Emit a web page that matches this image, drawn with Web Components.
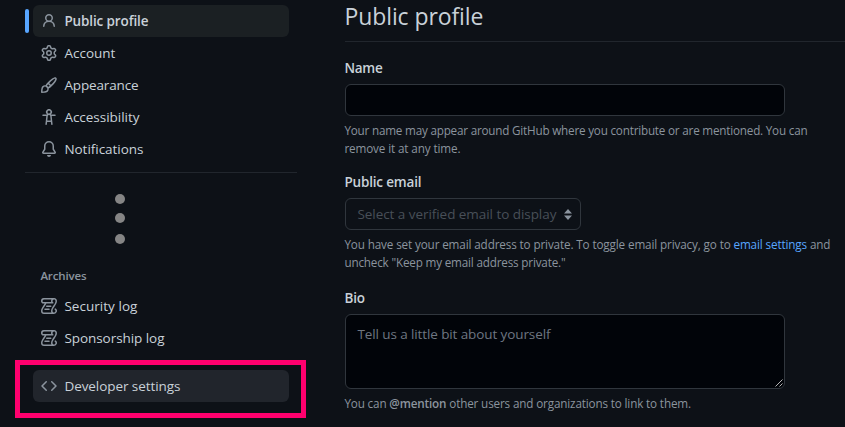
<!DOCTYPE html>
<html lang="en">
<head>
<meta charset="utf-8">
<title>Public profile</title>
<style>
html,body{margin:0;height:100%;overflow:hidden;background:#0d1117}
body{font-family:"Open Sans","Noto Sans",sans-serif;font-size:13.5px;color:#c9d1d9}
a{color:#58a6ff;text-decoration:none}
b{font-weight:600}
</style>
</head>
<body>
<settings-page>
  <nav-list slot="nav">
    <nav-item icon="person" selected><fit-text width="84">Public profile</fit-text></nav-item>
    <nav-item icon="gear"><fit-text width="51">Account</fit-text></nav-item>
    <nav-item icon="brush"><fit-text width="74">Appearance</fit-text></nav-item>
    <nav-item icon="access"><fit-text width="75">Accessibility</fit-text></nav-item>
    <nav-item icon="bell"><fit-text width="79">Notifications</fit-text></nav-item>
    <more-dots></more-dots>
    <nav-heading><fit-text width="46">Archives</fit-text></nav-heading>
    <nav-item icon="log"><fit-text width="73">Security log</fit-text></nav-item>
    <nav-item icon="log"><fit-text width="100">Sponsorship log</fit-text></nav-item>
    <highlight-box><nav-item icon="code" hovered><fit-text width="116">Developer settings</fit-text></nav-item></highlight-box>
  </nav-list>
  <page-title><fit-text width="139">Public profile</fit-text></page-title>
  <form-field>
    <fit-text slot="label" width="38">Name</fit-text>
    <text-box></text-box>
    <fit-text slot="help" width="463">Your name may appear around GitHub where you contribute or are mentioned. You can</fit-text>
    <fit-text slot="help" width="116">remove it at any time.</fit-text>
  </form-field>
  <form-field>
    <fit-text slot="label" width="77">Public email</fit-text>
    <select-box><fit-text width="199">Select a verified email to display</fit-text></select-box>
    <fit-text slot="help" width="486">You have set your email address to private. To toggle email privacy, go to <a href="#">email settings</a> and</fit-text>
    <fit-text slot="help" width="221">uncheck "Keep my email address private."</fit-text>
  </form-field>
  <form-field roomy>
    <fit-text slot="label" width="20.5">Bio</fit-text>
    <text-box multiline><fit-text width="193">Tell us a little bit about yourself</fit-text></text-box>
    <fit-text slot="help" width="346.5">You can <b>@mention</b> other users and organizations to link to them.</fit-text>
  </form-field>
</settings-page>
<script>
const ICONS = {
  person: 'M10.561 8.073a6.005 6.005 0 0 1 3.432 5.142.75.75 0 1 1-1.498.07 4.5 4.5 0 0 0-8.99 0 .75.75 0 0 1-1.498-.07 6.004 6.004 0 0 1 3.431-5.142 3.999 3.999 0 1 1 5.123 0ZM10.5 5a2.5 2.5 0 1 0-5 0 2.5 2.5 0 0 0 5 0Z',
  gear: 'M8 0a8.2 8.2 0 0 1 .701.031C9.444.095 9.99.645 10.16 1.29l.288 1.107c.018.066.079.158.212.224.231.114.454.243.668.386.123.082.233.09.299.071l1.103-.303c.644-.176 1.392.021 1.82.63.27.385.506.792.704 1.218.315.675.111 1.422-.364 1.891l-.814.806c-.049.048-.098.147-.088.294.016.257.016.515 0 .772-.01.147.038.246.088.294l.814.806c.475.469.679 1.216.364 1.891a7.977 7.977 0 0 1-.704 1.217c-.428.61-1.176.807-1.82.63l-1.102-.302c-.067-.019-.177-.011-.3.071a5.909 5.909 0 0 1-.668.386c-.133.066-.194.158-.211.224l-.29 1.106c-.168.646-.715 1.196-1.458 1.26a8.006 8.006 0 0 1-1.402 0c-.743-.064-1.289-.614-1.458-1.26l-.289-1.106c-.018-.066-.079-.158-.212-.224a5.738 5.738 0 0 1-.668-.386c-.123-.082-.233-.09-.299-.071l-1.103.303c-.644.176-1.392-.021-1.82-.63a8.12 8.12 0 0 1-.704-1.218c-.315-.675-.111-1.422.363-1.891l.815-.806c.05-.048.098-.147.088-.294a6.214 6.214 0 0 1 0-.772c.01-.147-.038-.246-.088-.294l-.815-.806C.635 6.045.431 5.298.746 4.623a7.92 7.92 0 0 1 .704-1.217c.428-.61 1.176-.807 1.82-.63l1.102.302c.067.019.177.011.3-.071.214-.143.437-.272.668-.386.133-.066.194-.158.211-.224l.29-1.106C6.009.645 6.556.095 7.299.03 7.53.01 7.764 0 8 0Zm-.571 1.525c-.036.003-.108.036-.137.146l-.289 1.105c-.147.561-.549.967-.998 1.189-.173.086-.34.183-.5.29-.417.278-.97.423-1.529.27l-1.103-.303c-.109-.03-.175.016-.195.045-.22.312-.412.644-.573.99-.014.031-.021.11.059.19l.815.806c.411.406.562.957.53 1.456a4.709 4.709 0 0 0 0 .582c.032.499-.119 1.05-.53 1.456l-.815.806c-.081.08-.073.159-.059.19.162.346.353.677.573.989.02.03.085.076.195.046l1.102-.303c.56-.153 1.113-.008 1.53.27.161.107.328.204.501.29.447.222.85.629.997 1.189l.289 1.105c.029.109.101.143.137.146a6.6 6.6 0 0 0 1.142 0c.036-.003.108-.036.137-.146l.289-1.105c.147-.561.549-.967.998-1.189.173-.086.34-.183.5-.29.417-.278.97-.423 1.529-.27l1.103.303c.109.029.175-.016.195-.045.22-.313.411-.644.573-.99.014-.031.021-.11-.059-.19l-.815-.806c-.411-.406-.562-.957-.53-1.456a4.709 4.709 0 0 0 0-.582c-.032-.499.119-1.05.53-1.456l.815-.806c.081-.08.073-.159.059-.19a6.464 6.464 0 0 0-.573-.989c-.02-.03-.085-.076-.195-.046l-1.102.303c-.56.153-1.113.008-1.53-.27a4.44 4.44 0 0 0-.501-.29c-.447-.222-.85-.629-.997-1.189l-.289-1.105c-.029-.11-.101-.143-.137-.146a6.6 6.6 0 0 0-1.142 0ZM11 8a3 3 0 1 1-6 0 3 3 0 0 1 6 0ZM9.5 8a1.5 1.5 0 1 0-3.001.001A1.5 1.5 0 0 0 9.5 8Z',
  brush: 'M11.134 1.535c.7-.509 1.416-.942 2.076-1.155.649-.21 1.463-.267 2.069.34.603.601.568 1.411.368 2.07-.202.668-.624 1.39-1.125 2.096-1.011 1.424-2.496 2.987-3.775 4.249-1.098 1.084-2.132 1.839-3.04 2.3a3.744 3.744 0 0 1-1.055 3.217c-.431.431-1.065.691-1.657.861-.614.177-1.294.287-1.914.357A21.151 21.151 0 0 1 .797 16H.743l.007-.75H.749L.742 16a.75.75 0 0 1-.743-.742l.743-.008-.742.007v-.054a21.25 21.25 0 0 1 .13-2.284c.067-.647.187-1.287.358-1.914.17-.591.43-1.226.86-1.657a3.746 3.746 0 0 1 3.227-1.054c.466-.893 1.225-1.907 2.314-2.982 1.271-1.255 2.833-2.75 4.246-3.777ZM1.62 13.089c-.051.464-.086.929-.104 1.395.466-.018.932-.053 1.396-.104a10.511 10.511 0 0 0 1.668-.309c.526-.151.856-.325 1.011-.48a2.25 2.25 0 1 0-3.182-3.182c-.155.155-.329.485-.48 1.01a10.515 10.515 0 0 0-.309 1.67Zm10.396-10.34c-1.224.89-2.605 2.189-3.822 3.384l1.718 1.718c1.21-1.205 2.51-2.597 3.387-3.833.47-.662.78-1.227.912-1.662.134-.444.032-.551.009-.575h-.001V1.78c-.014-.014-.113-.113-.548.027-.432.14-.995.462-1.655.942Zm-4.832 7.266-.001.001a9.859 9.859 0 0 0 1.63-1.142L7.155 7.216a9.7 9.7 0 0 0-1.161 1.607c.482.302.889.71 1.19 1.192Z',
  access: 'M9.923 5.302c.063.063.122.129.178.198H14A.75.75 0 0 1 14 7h-3.3l.578 5.163.362 2.997a.75.75 0 0 1-1.49.18L9.868 13H6.132l-.282 2.34a.75.75 0 0 1-1.49-.18l.362-2.997L5.3 7H2a.75.75 0 0 1 0-1.5h3.9a2.54 2.54 0 0 1 .176-.198 3 3 0 1 1 3.847 0ZM9.2 7.073h-.001a1.206 1.206 0 0 0-2.398 0L6.305 11.5h3.39ZM9.5 3a1.5 1.5 0 1 0-3.001.001A1.5 1.5 0 0 0 9.5 3Z',
  bell: 'M8 16a2 2 0 0 0 1.985-1.75c.017-.137-.097-.25-.235-.25h-3.5c-.138 0-.252.113-.235.25A2 2 0 0 0 8 16ZM3 5a5 5 0 0 1 10 0v2.947c0 .05.015.098.042.139l1.703 2.555A1.519 1.519 0 0 1 13.482 13H2.518a1.516 1.516 0 0 1-1.263-2.36l1.703-2.554A.255.255 0 0 0 3 7.947Zm5-3.5A3.5 3.5 0 0 0 4.5 5v2.947c0 .346-.102.683-.294.97l-1.703 2.556a.017.017 0 0 0-.003.01l.001.006c0 .002.002.004.004.006l.006.004.007.001h10.964l.007-.001.006-.004.004-.006.001-.007a.017.017 0 0 0-.003-.01l-1.703-2.554a1.745 1.745 0 0 1-.294-.97V5A3.5 3.5 0 0 0 8 1.5Z',
  log: 'M5 8.25a.75.75 0 0 1 .75-.75h4a.75.75 0 0 1 0 1.5h-4A.75.75 0 0 1 5 8.25ZM4 10.5A.75.75 0 0 0 4 12h4a.75.75 0 0 0 0-1.5H4Z M13-.005c1.654 0 3 1.328 3 3 0 .982-.338 1.933-.783 2.818-.443.879-1.028 1.758-1.582 2.588l-.011.017c-.568.853-1.104 1.659-1.501 2.446-.398.789-.623 1.494-.623 2.136a1.5 1.5 0 1 0 2.333-1.248.75.75 0 0 1 .834-1.246A3 3 0 0 1 13 16H3a3 3 0 0 1-3-3c0-1.582.891-3.135 1.777-4.506.209-.322.418-.637.623-.946.473-.709.923-1.386 1.287-2.048H2.51c-.576 0-1.381-.133-1.907-.783A2.68 2.68 0 0 1 0 2.995a3 3 0 0 1 3-3Zm0 1.5a1.5 1.5 0 0 0-1.5 1.5c0 .476.223.834.667 1.132A.75.75 0 0 1 11.75 5.5H5.368c-.467 1.003-1.141 2.015-1.773 2.963-.192.289-.381.571-.558.845C2.13 10.711 1.5 11.916 1.5 13A1.5 1.5 0 0 0 3 14.5h7.401A2.989 2.989 0 0 1 10 13c0-.979.338-1.928.784-2.812.441-.874 1.023-1.748 1.575-2.576l.017-.026c.568-.853 1.103-1.658 1.501-2.448.398-.79.623-1.497.623-2.143 0-.838-.669-1.5-1.5-1.5Zm-10 0a1.5 1.5 0 0 0-1.5 1.5c0 .321.1.569.27.778.097.12.325.227.74.227h7.674A2.737 2.737 0 0 1 10 2.995c0-.546.146-1.059.401-1.5Z',
  code: 'm11.28 3.22 4.25 4.25a.75.75 0 0 1 0 1.06l-4.25 4.25a.749.749 0 0 1-1.275-.326.749.749 0 0 1 .215-.734L13.94 8l-3.72-3.72a.749.749 0 0 1 .326-1.275.749.749 0 0 1 .734.215Zm-6.56 0a.751.751 0 0 1 1.042.018.751.751 0 0 1 .018 1.042L2.06 8l3.72 3.72a.749.749 0 0 1-.326 1.275.749.749 0 0 1-.734-.215L.47 8.53a.75.75 0 0 1 0-1.06Z'
};

// Registers an element whose shadow root is filled from a string or a function of the element.
function define(name, content) {
  customElements.define(name, class extends HTMLElement {
    constructor() {
      super();
      this.attachShadow({ mode: 'open' });
    }
    connectedCallback() {
      this.shadowRoot.innerHTML = typeof content === 'function' ? content(this) : content;
    }
  });
}

define('settings-page', `<style>
  :host{display:grid;grid-template-columns:272px 1fr;column-gap:48px;padding-left:25px;height:427px;box-sizing:border-box;overflow:hidden}
  main{display:flex;flex-direction:column;min-width:0}
</style><slot name="nav"></slot><main><slot></slot></main>`);

define('nav-list', `<style>:host{display:flex;flex-direction:column;padding-top:5px}</style><slot></slot>`);

define('nav-item', el => `<style>
  :host{display:flex;align-items:center;gap:4px;height:32px;flex:none}
  .bar{width:4px;height:24px;border-radius:6px}
  .row{display:flex;align-items:center;gap:8px;width:256px;height:32px;padding-left:8px;box-sizing:border-box;border-radius:6px;line-height:20px}
  svg{width:16px;height:16px;fill:#8b949e;flex:none}
  :host([selected]) .bar{background:#58a6ff}
  :host([selected]) .row{background:#1b2023;font-weight:600}
  :host([hovered]) .row{background:#21252c}
</style><span class="bar"></span><span class="row"><svg viewBox="0 0 16 16"><path d="${ICONS[el.getAttribute('icon')]}"/></svg><slot></slot></span>`);

define('more-dots', `<style>
  :host{display:flex;flex-direction:column;align-items:flex-start;margin-top:7px;border-top:1px solid #21262d;height:90px;padding:21px 0 0 90px;box-sizing:border-box;flex:none}
  i{width:10px;height:10px;border-radius:50%;background:#858585;margin-bottom:9px}
  i:last-child{margin-top:2px;margin-bottom:0}
</style><i></i><i></i><i></i>`);

define('nav-heading', `<style>:host{display:block;height:28px;flex:none;padding:5px 0 0 16px;box-sizing:border-box;font-size:11.5px;line-height:18px;font-weight:600;color:#8b949e}</style><slot></slot>`);

define('highlight-box', `<style>:host{display:block;flex:none;margin:6px -9px 0 -10px;height:58px;border:5px solid #ff006e;box-sizing:border-box;padding:5px 0 0 5px}</style><slot></slot>`);

define('page-title', `<style>:host{display:block;height:42px;box-sizing:border-box;flex:none;border-bottom:1px solid #21262d;font-size:23px;line-height:33px}</style><slot></slot>`);

define('form-field', `<style>
  :host{display:flex;flex-direction:column;flex:none;padding-top:16px}
  :host([roomy]){padding-top:18px}
  .label{font-weight:600;line-height:21px;height:26px}
  .help{display:flex;flex-direction:column;align-items:flex-start;font-size:11.7px;line-height:18px;color:#8b949e;margin:5px 0 -1px}
</style><div class="label"><slot name="label"></slot></div><slot></slot><div class="help"><slot name="help"></slot></div>`);

define('text-box', `<style>
  :host{position:relative;display:block;width:440px;height:32px;box-sizing:border-box;border:1px solid #30363d;border-radius:6px;background:#010409;color:#6e7681;padding:9px 12px;line-height:20px}
  :host([multiline]){height:75px}
  svg{display:none;position:absolute;right:1px;bottom:1px;width:8px;height:8px;stroke:#b5b5b5;stroke-width:1}
  :host([multiline]) svg{display:block}
</style><slot></slot><svg viewBox="0 0 8 8"><path d="M.5 7.5l7-7M4.5 7.5l3-3"/></svg>`);

define('select-box', `<style>
  :host{display:flex;align-items:center;justify-content:space-between;width:236px;height:32px;box-sizing:border-box;border:1px solid #30363d;border-radius:6px;padding:0 8px 0 12px;color:#484f58;line-height:20px}
  svg{width:8px;height:11px;fill:#8b949e}
</style><slot></slot><svg viewBox="0 0 8 11"><path d="M4 0l4 4.5H0zM4 11L0 6.5h8z"/></svg>`);

// A single line of text, tracked so that it fills the width given in its attribute.
customElements.define('fit-text', class extends HTMLElement {
  constructor() {
    super();
    this.attachShadow({ mode: 'open' }).innerHTML = `<style>:host{display:inline-block;white-space:nowrap;margin-left:-.6px}</style><slot></slot>`;
  }
  connectedCallback() {
    requestAnimationFrame(() => this.fit());
  }
  fit() {
    this.style.letterSpacing = '0px';
    const spacing = (this.getAttribute('width') - this.getBoundingClientRect().width) / this.textContent.length;
    this.style.letterSpacing = spacing.toFixed(3) + 'px';
  }
});
document.querySelectorAll('fit-text').forEach(el => el.fit());
</script>
</body>
</html>
